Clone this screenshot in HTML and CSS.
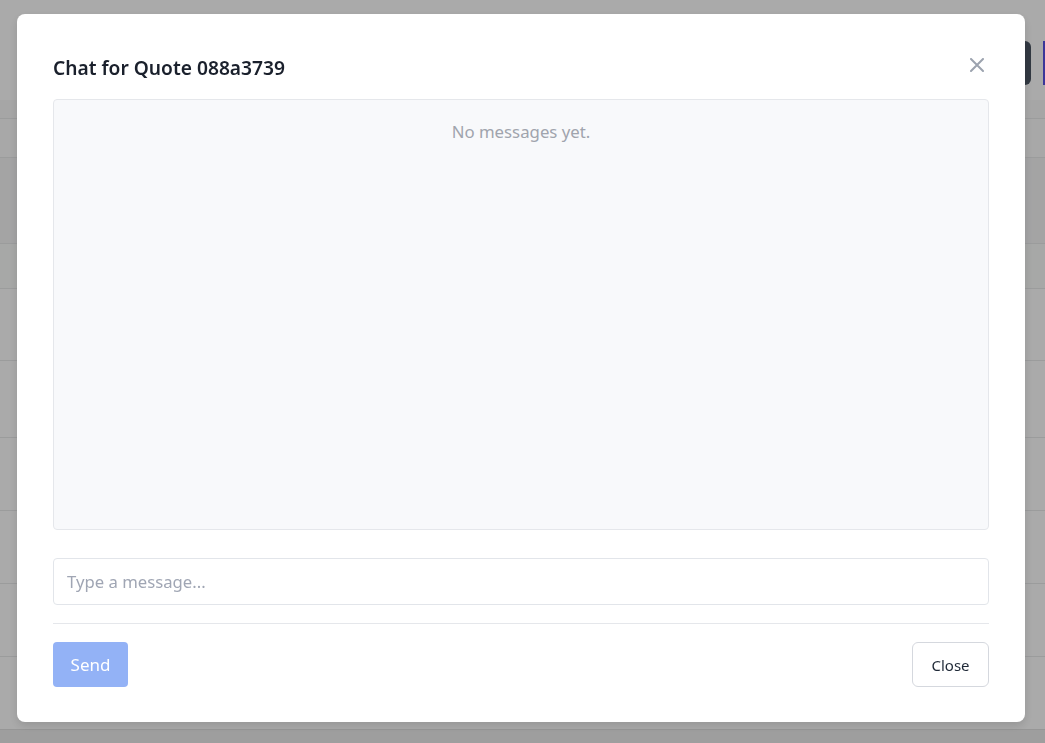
FILE: index.html
```html
<!DOCTYPE html>
<html lang="en">
<head>
<meta charset="utf-8">
<title>Chat for Quote</title>
<link rel="stylesheet" href="styles.css">
</head>
<body>
<div class="page">
  <div class="topbar">
    <div class="top-actions">
      <span class="btn-dark"></span>
      <span class="btn-purple"></span>
    </div>
  </div>
  <div class="strip"></div>
  <div class="table">
    <div class="row head"></div>
    <div class="row tall alt"></div>
    <div class="row short tint"></div>
    <div class="row mid"></div>
    <div class="row big"></div>
    <div class="row mid2"></div>
    <div class="row mid2"></div>
    <div class="row mid2"></div>
    <div class="row end"></div>
  </div>
  <div class="footer-band"></div>
</div>

<div class="overlay">
  <div class="modal">
    <div class="modal-header">
      <h2 class="modal-title">Chat for Quote 088a3739</h2>
      <button class="close-x" aria-label="Close">
        <svg width="14" height="14" viewBox="0 0 14 14"><path d="M1 1 L13 13 M13 1 L1 13" stroke="currentColor" stroke-width="2" stroke-linecap="round" fill="none"/></svg>
      </button>
    </div>
    <div class="modal-body">
      <div class="messages">
        <p class="empty">No messages yet.</p>
      </div>
      <input class="msg-input" type="text" placeholder="Type a message...">
    </div>
    <div class="modal-footer">
      <button class="send-btn" disabled>Send</button>
      <button class="close-btn">Close</button>
    </div>
  </div>
</div>
</body>
</html>
```

FILE: styles.css
```css
* { box-sizing: border-box; }
html, body { margin: 0; padding: 0; }
body {
  font-family: "Noto Sans", "Open Sans", "Liberation Sans", sans-serif;
  background: #ffffff;
  width: 1045px;
  height: 743px;
  overflow: hidden;
}
.page {
  display: flex;
  flex-direction: column;
  height: 743px;
}
.topbar {
  height: 100px;
  display: flex;
  justify-content: flex-end;
  padding-top: 41px;
}
.top-actions {
  display: flex;
  gap: 12px;
}
.btn-dark {
  width: 80px;
  height: 44px;
  background: #4b5563;
  border-radius: 6px;
}
.btn-purple {
  width: 2px;
  height: 44px;
  background: #5a52e6;
}
.strip {
  height: 18px;
  background: #fafafa;
}
.table {
  flex: 1;
  display: flex;
  flex-direction: column;
}
.row {
  border-top: 1px solid #e9eaeb;
  flex: none;
}
.row.head { height: 39px; background: #fcfcfc; }
.row.tall { height: 86px; }
.row.alt { background: #f6f6f7; }
.row.short { height: 45px; }
.row.tint { background: #fbfcfb; }
.row.mid { height: 72px; }
.row.big { height: 77px; }
.row.mid2 { height: 73px; }
.row.end { flex: 1; }
.footer-band {
  height: 14px;
  background: #eeeeee;
  border-top: 1px solid #e2e2e2;
}

.overlay {
  position: fixed;
  inset: 0;
  background: rgba(0, 0, 0, 0.335);
  display: flex;
  align-items: flex-start;
  justify-content: flex-start;
}
.modal {
  margin-top: 14px;
  margin-left: 17px;
  width: 1008px;
  height: 708px;
  background: #ffffff;
  border-radius: 8px;
  box-shadow: 0 4px 10px rgba(0, 0, 0, 0.12);
  display: flex;
  flex-direction: column;
  padding: 0 36px;
}
.modal-header {
  display: flex;
  align-items: center;
  justify-content: space-between;
  padding-top: 40px;
  height: 67px;
}
.modal-title {
  margin: 0;
  font-size: 19.2px;
  font-weight: 600;
  line-height: 27px;
  color: #1a202c;
}
.close-x {
  border: 0;
  background: transparent;
  padding: 0;
  margin-right: 5px;
  margin-top: -5px;
  width: 14px;
  height: 14px;
  color: #9ca3af;
  display: flex;
}
.modal-body {
  margin-top: 18px;
  display: flex;
  flex-direction: column;
  gap: 28px;
}
.messages {
  height: 431px;
  background: #f8f9fb;
  border: 1px solid #e5e7eb;
  border-radius: 4px;
  padding-top: 20px;
}
.empty {
  margin: 0;
  text-align: center;
  font-size: 16.8px;
  line-height: 24px;
  color: #a0a4ad;
}
.msg-input {
  height: 47px;
  width: 100%;
  border: 1px solid #e2e5ea;
  border-radius: 4px;
  padding: 0 13px;
  font-family: inherit;
  font-size: 16.7px;
  color: #1a202c;
  outline: none;
}
.msg-input::placeholder { color: #a0a6b4; }
.modal-footer {
  margin-top: 18px;
  border-top: 1px solid #e5e7eb;
  padding-top: 18px;
  display: flex;
  justify-content: space-between;
  align-items: center;
}
.send-btn {
  width: 75px;
  height: 45px;
  border: 0;
  border-radius: 4px;
  background: #93b2f6;
  color: #ffffff;
  font-family: inherit;
  font-size: 17px;
  padding: 0;
}
.close-btn {
  width: 77px;
  height: 45px;
  border: 1px solid #d5d8de;
  border-radius: 6px;
  background: #ffffff;
  color: #1f2937;
  font-family: inherit;
  font-size: 15px;
  padding: 0;
}
```
